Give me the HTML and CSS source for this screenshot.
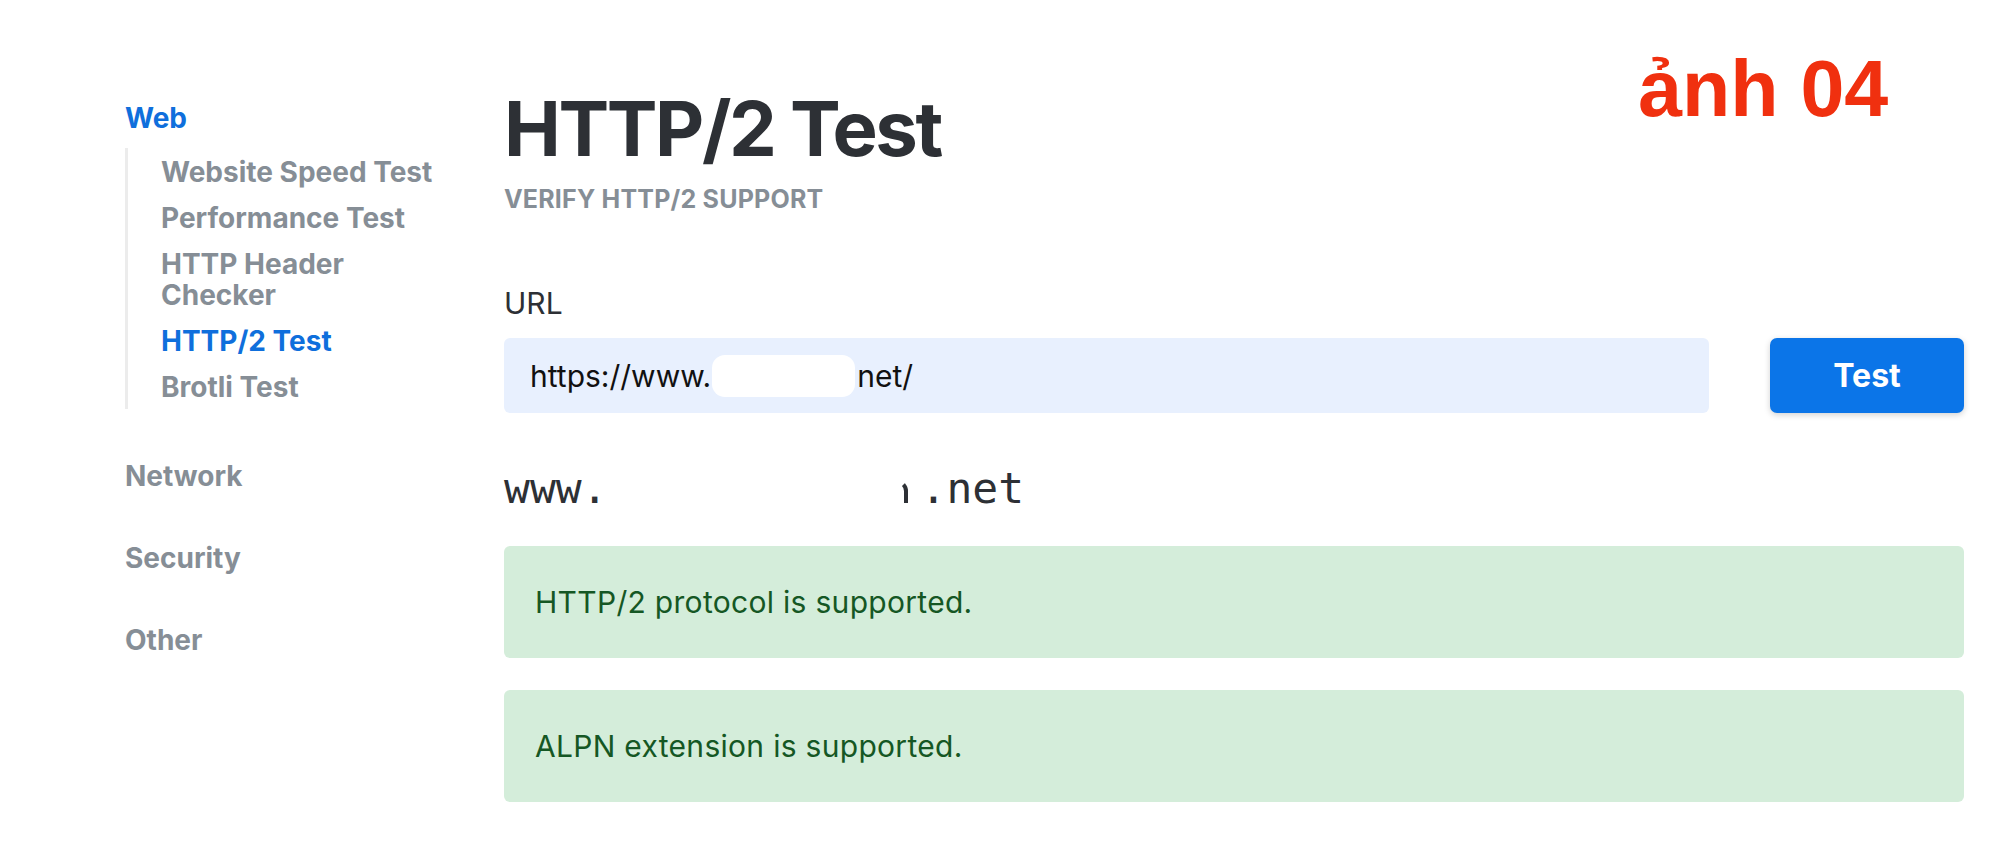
FILE: index.html
```html
<!DOCTYPE html>
<html lang="vi">
<head>
<meta charset="utf-8">
<title>HTTP/2 Test</title>
<link rel="stylesheet" href="styles.css">
</head>
<body>
<div class="page">
  <nav class="sidebar">
    <div class="section">
      <a class="section-title active" href="#">Web</a>
      <ul class="sublist">
        <li><a href="#">Website Speed Test</a></li>
        <li><a href="#">Performance Test</a></li>
        <li><a href="#">HTTP Header<br>Checker</a></li>
        <li><a class="active" href="#">HTTP/2 Test</a></li>
        <li><a href="#">Brotli Test</a></li>
      </ul>
    </div>
    <div class="section"><a class="section-title" href="#">Network</a></div>
    <div class="section"><a class="section-title" href="#">Security</a></div>
    <div class="section"><a class="section-title" href="#">Other</a></div>
  </nav>
  <main class="main">
    <h1 class="title">HTTP/2 Test</h1>
    <div class="subtitle">VERIFY HTTP/2 SUPPORT</div>
    <label class="label">URL</label>
    <div class="form-row">
      <div class="url-field">https://www.<span class="redact"></span>net/</div>
      <button class="btn">Test</button>
    </div>
    <div class="domain">www.<span class="gap"></span><span class="frag"></span>.net</div>
    <div class="alert">HTTP/2 protocol is supported.</div>
    <div class="alert">ALPN extension is supported.</div>
  </main>
  <div class="stamp">ảnh 04</div>
</div>
</body>
</html>
```
FILE: styles.css
```css
* { box-sizing: border-box; }
html, body { margin: 0; padding: 0; background: #fff; }
body { font-family: Inter, "Noto Sans", sans-serif; color: #2d3035; }

.page {
  position: relative;
  display: flex;
  padding-left: 125px;
  padding-right: 50px;
  min-height: 864px;
}

.sidebar {
  width: 379px;
  flex: none;
  padding-top: 103px;
}
.section + .section { margin-top: 52px; }
.section-title {
  display: block;
  font-size: 28px;
  font-weight: 700;
  line-height: 30px;
  color: #868e96;
  text-decoration: none;
}
.section-title.active { color: #0f6fdc; }
.sublist {
  list-style: none;
  margin: 15px 0 0;
  padding: 9px 0 6px 33px;
  border-left: 3px solid #ececec;
}
.sublist li + li { margin-top: 15px; }
.sublist a {
  display: block;
  font-size: 28px;
  font-weight: 700;
  line-height: 31px;
  color: #868e96;
  text-decoration: none;
}
.sublist a.active { color: #0f6fdc; }

.main {
  flex: 1;
  display: flex;
  flex-direction: column;
  padding-top: 85px;
}
.title {
  margin: 0;
  font-size: 76px;
  font-weight: 700;
  line-height: 86px;
  letter-spacing: -2.4px;
  color: #2d3035;
}
.subtitle {
  margin-top: 13px;
  font-size: 25px;
  font-weight: 700;
  line-height: 30px;
  letter-spacing: 0.2px;
  color: #868e96;
}
.label {
  margin-top: 74px;
  font-size: 30px;
  line-height: 30px;
  color: #2d3035;
}
.form-row {
  display: flex;
  gap: 61px;
  margin-top: 20px;
}
.url-field {
  flex: 1;
  height: 75px;
  display: flex;
  align-items: center;
  padding-left: 26px;
  background: #e8f0fe;
  border-radius: 6px;
  font-size: 30px;
  color: #111;
}
.redact {
  display: inline-block;
  width: 143px;
  height: 42px;
  margin: 0 2px 0 1px;
  background: #fff;
  border-radius: 13px;
}
.btn {
  width: 194px;
  height: 75px;
  flex: none;
  border: 0;
  border-radius: 7px;
  background: #0b75e8;
  color: #fff;
  font-family: Inter, "Noto Sans", sans-serif;
  font-size: 32px;
  font-weight: 700;
  box-shadow: 0 2px 6px rgba(0, 0, 0, 0.18);
}

.domain {
  margin-top: 50px;
  font-family: "DejaVu Sans Mono", monospace;
  font-size: 43px;
  line-height: 50px;
  color: #2d3035;
  white-space: pre;
}
.gap { display: inline-block; width: 286px; }
.frag {
  display: inline-block;
  width: 14px;
  height: 23px;
  margin-right: 13px;
  border-top: 4px solid transparent;
  border-right: 4.5px solid #2d3035;
  border-top-right-radius: 11px;
}

.alert {
  height: 112px;
  display: flex;
  align-items: center;
  padding-left: 31px;
  background: #d4edda;
  border-radius: 6px;
  color: #155724;
  font-size: 30px;
  letter-spacing: 0.3px;
}
.domain + .alert { margin-top: 33px; }
.alert + .alert { margin-top: 32px; }

.stamp {
  position: absolute;
  left: 1638px;
  top: 44px;
  font-family: "Liberation Sans", Arial, sans-serif;
  font-size: 79px;
  font-weight: 700;
  line-height: 90px;
  color: #f0300f;
}
```
